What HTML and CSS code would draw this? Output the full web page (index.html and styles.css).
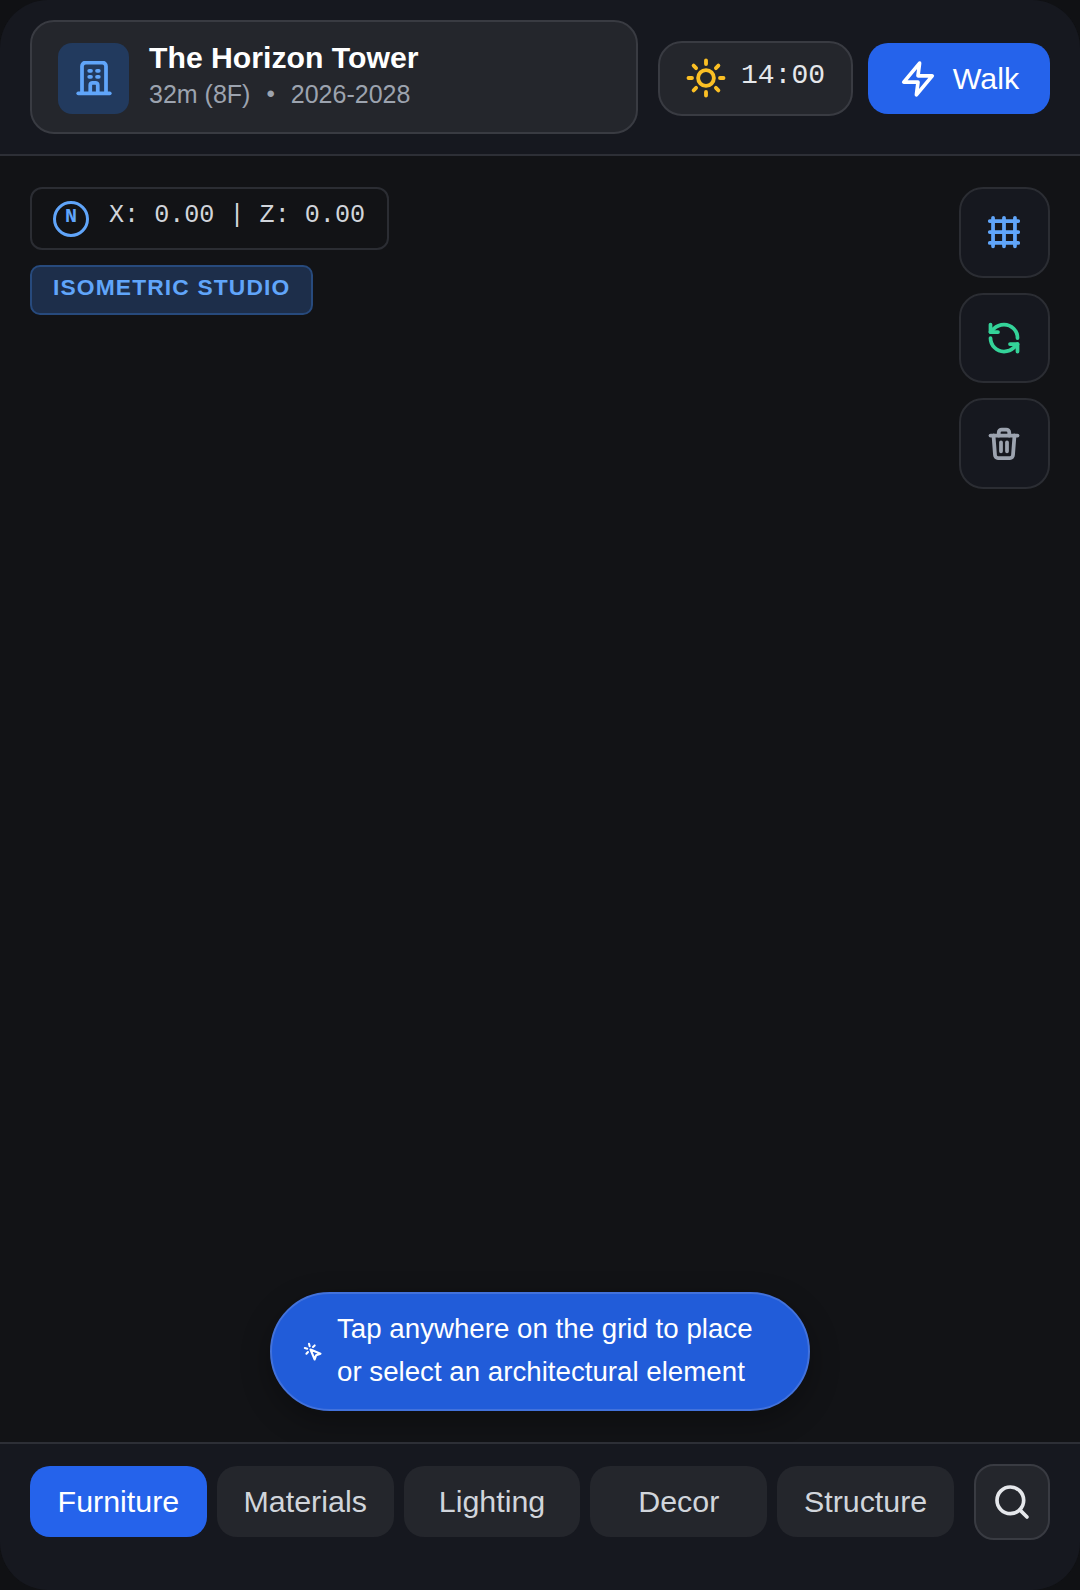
FILE: index.html
```html
<!DOCTYPE html>
<html lang="en">
<head>
<meta charset="utf-8">
<title>The Horizon Tower</title>
<link rel="stylesheet" href="styles.css">
</head>
<body>
<div class="app">
  <header class="header">
    <div class="project">
      <div class="project-icon">
        <svg class="icon-36" viewBox="0 0 24 24"><path d="M4 21V3.500A2.500 2.500 0 0 1 6.500 1h11A2.500 2.500 0 0 1 20 3.500V21"/><path d="M1.500 21.500h21"/><path d="M9.500 21v-5a1.500 1.500 0 0 1 1.500-1.500h2a1.500 1.500 0 0 1 1.500 1.500v5"/><path d="M8.800 6.500h1.200M14 6.500h1.200M8.800 10.500h1.200M14 10.500h1.200"/></svg>
      </div>
      <div class="project-text">
        <div class="project-title">The Horizon Tower</div>
        <div class="project-meta"><span>32m (8F)</span><span class="dot">•</span><span>2026-2028</span></div>
      </div>
    </div>
    <div class="time-pill">
      <svg class="icon-42 sun" viewBox="0 0 24 24"><circle cx="12" cy="12" r="4.500"/><path d="M12 2v2M12 20v2M4.930 4.930l1.410 1.410M17.660 17.660l1.410 1.410M2 12h2M20 12h2M6.340 17.660l-1.410 1.410M19.070 4.930l-1.410 1.410"/></svg>
      <span class="time">14:00</span>
    </div>
    <button class="walk">
      <svg class="icon-38 zap" viewBox="0 0 24 24"><path d="M13 2 3 14h9l-1 8 10-12h-9l1-8z"/></svg>
      <span>Walk</span>
    </button>
  </header>
  <main class="canvas">
    <div class="canvas-top">
      <div class="hud">
        <div class="coords">
          <span class="north">N</span>
          <span class="coord-text">X: 0.00 | Z: 0.00</span>
        </div>
        <div class="badge">ISOMETRIC STUDIO</div>
      </div>
      <div class="tools">
        <button class="tool"><svg class="icon-36 blue" viewBox="0 0 24 24"><path d="M2.500 4.700h19M2.500 12h19M2.500 19.300h19M4.700 2.500v19M12 2.500v19M19.300 2.500v19"/></svg></button>
        <button class="tool"><svg class="icon-36 green" viewBox="0 0 24 24"><path d="M21 12a9 9 0 0 0-9-9 9.750 9.750 0 0 0-6.740 2.740L3 8"/><path d="M3 3v5h5"/><path d="M3 12a9 9 0 0 0 9 9 9.750 9.750 0 0 0 6.740-2.740L21 16"/><path d="M16 16h5v5"/></svg></button>
        <button class="tool"><svg class="icon-36 gray" viewBox="0 0 24 24"><path d="M3 7h18"/><path d="M5 7l1 13a2 2 0 0 0 2 2h8a2 2 0 0 0 2-2l1-13"/><path d="M8.500 7V5a2 2 0 0 1 2-2h3a2 2 0 0 1 2 2v2"/><path d="M10 11.500v6M14 11.500v6"/></svg></button>
      </div>
    </div>
    <div class="toast">
      <svg class="icon-20" viewBox="0 0 24 24"><path d="m9 9 5 12 1.800-5.200L21 14z"/><path d="M7.200 2.200 8 5.100M5.100 8l-2.900-.8M14 4.100 12 6M6 12l-1.900 2"/></svg>
      <p>Tap anywhere on the grid to place<br>or select an architectural element</p>
    </div>
  </main>
  <footer class="footer">
    <nav class="tabs">
      <button class="tab active">Furniture</button>
      <button class="tab">Materials</button>
      <button class="tab">Lighting</button>
      <button class="tab">Decor</button>
      <button class="tab">Structure</button>
    </nav>
    <button class="search"><svg class="icon-40" viewBox="0 0 24 24"><circle cx="11" cy="11" r="8"/><path d="m21 21-4.300-4.300"/></svg></button>
  </footer>
</div>
</body>
</html>
```
FILE: styles.css
```css
* { box-sizing: border-box; }
html, body { margin: 0; padding: 0; background: #101114; }
body { width: 1080px; height: 1590px; font-family: "Liberation Sans", Arial, sans-serif; overflow: hidden; }
button { font-family: inherit; cursor: pointer; }
svg { fill: none; stroke: currentColor; stroke-width: 2.500; stroke-linecap: round; stroke-linejoin: round; display: block; flex: none; }
.icon-20 { width: 20px; height: 20px; }
.icon-36 { width: 36px; height: 36px; }
.icon-38 { width: 38px; height: 38px; }
.icon-40 { width: 40px; height: 40px; }
.icon-42 { width: 42px; height: 42px; }

.app { width: 1080px; height: 1590px; border-radius: 48px; overflow: hidden; background: #121316; display: flex; flex-direction: column; }

.header { height: 156px; flex: none; display: flex; align-items: center; gap: 15px; padding: 20px 30px; background: #16181f; border-bottom: 2px solid #2d2f36; }
.project { flex: 1; height: 114px; margin-right: 5px; display: flex; align-items: center; gap: 20px; padding: 0 26px; background: #24262c; border: 2px solid #393b42; border-radius: 24px; }
.project-icon { width: 71px; height: 71px; margin-top: 3px; border-radius: 14px; background: #223a5e; color: #60a5fa; display: flex; align-items: center; justify-content: center; }
.project-text { display: flex; flex-direction: column; gap: 2px; margin-bottom: 4px; }
.project-title { font-size: 30.200px; font-weight: 700; color: #fff; line-height: 36px; }
.project-meta { font-size: 25px; color: #9ca3af; line-height: 32px; display: flex; gap: 16px; }
.dot { font-size: 24px; }

.time-pill { width: 195px; height: 75px; margin-top: 2px; display: flex; align-items: center; gap: 14px; padding: 0 25px; background: #24262c; border: 2px solid #393b42; border-radius: 24px; }
.sun { color: #fbbf24; stroke-width: 2.200; }
.zap { stroke-width: 2.300; }
.time { font-family: "Liberation Mono", monospace; font-size: 28px; color: #e5e7eb; margin-top: -6px; }
.walk { width: 182px; height: 71px; margin-top: 3px; display: flex; align-items: center; justify-content: center; gap: 16px; background: #2563eb; color: #fff; border: 0; border-radius: 20px; font-size: 30.400px; padding: 0; }

.canvas { flex: 1; display: flex; flex-direction: column; justify-content: space-between; padding: 31px 30px 31px; }
.canvas-top { display: flex; justify-content: space-between; align-items: flex-start; }
.hud { display: flex; flex-direction: column; align-items: flex-start; gap: 15px; }
.coords { height: 63px; display: flex; align-items: center; gap: 20px; padding: 0 22px 0 21px; background: #121316; border: 2px solid #2b2d33; border-radius: 12px; }
.north { width: 36px; height: 36px; border: 3px solid #60a5fa; border-radius: 50%; color: #60a5fa; font-family: "Liberation Mono", monospace; font-weight: 700; font-size: 20px; display: flex; justify-content: center; padding-top: 1px; line-height: 24px; }
.coord-text { font-family: "Liberation Mono", monospace; font-size: 25.100px; color: #d1d5db; margin-top: -6px; }
.badge { height: 50px; padding: 0 21px 6px; display: flex; align-items: center; background: #1d2e4a; border: 2px solid #274a7d; border-radius: 10px; color: #60a5fa; font-size: 22.800px; font-weight: 700; letter-spacing: 1.140px; }

.tools { display: flex; flex-direction: column; gap: 15px; }
.tool { width: 91px; height: 90.500px; display: flex; align-items: center; justify-content: center; background: #16181f; border: 2px solid #2b2d33; border-radius: 24px; padding: 0 1px 0 0; }
.blue { color: #60a5fa; }
.green { color: #34d399; }
.gray { color: #9ca3af; }

.toast { align-self: center; width: 540px; height: 119px; display: flex; align-items: center; gap: 14px; padding: 0 31px; background: #215cd9; border: 2px solid #4272dc; border-radius: 60px; color: #fff; box-shadow: 0 10px 30px rgba(0,0,0,.3); }
.toast p { margin: 0 0 2px; font-size: 27.700px; line-height: 42.500px; }

.footer { height: 148px; flex: none; display: flex; align-items: flex-start; gap: 20px; padding: 20px 30px 0; background: #16181f; border-top: 2px solid #2d2f36; }
.tabs { flex: 1; display: flex; gap: 10px; margin-top: 2px; }
.tab { flex: 1; height: 71px; border: 0; border-radius: 20px; background: #24262c; color: #d1d5db; font-size: 30.400px; padding: 0; }
.tab.active { background: #2563eb; color: #fff; }
.search { width: 76px; height: 76px; flex: none; display: flex; align-items: center; justify-content: center; background: #24262c; border: 2px solid #393b42; border-radius: 20px; color: #e5e7eb; padding: 0; }
.search svg { stroke-width: 2.200; }
```
